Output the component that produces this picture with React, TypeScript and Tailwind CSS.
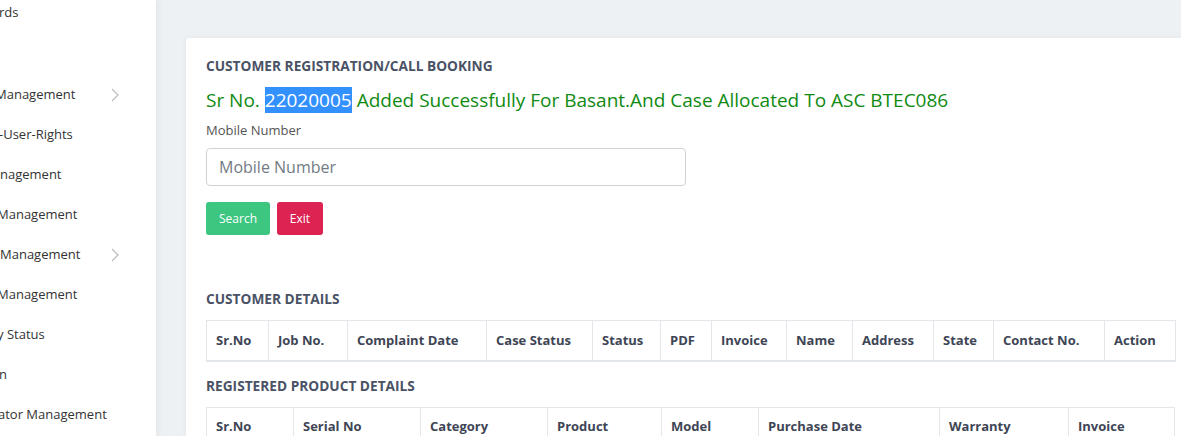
const sideItems: { label: string; chevron?: boolean; shift: number; h?: number }[] = [
  { label: "rds", shift: -1, h: 42 },
  { label: "", shift: 0 },
  { label: "Management", chevron: true, shift: -5 },
  { label: "-User-Rights", shift: -1 },
  { label: "nagement", shift: 0 },
  { label: "Management", shift: -3 },
  { label: "Management", chevron: true, shift: 0 },
  { label: "Management", shift: -3 },
  { label: "y Status", shift: -3 },
  { label: "n", shift: -1 },
  { label: "ator Management", shift: -2 },
];

const customerCols = [
  { h: "Sr.No", w: 62 },
  { h: "Job No.", w: 79 },
  { h: "Complaint Date", w: 139 },
  { h: "Case Status", w: 106 },
  { h: "Status", w: 68 },
  { h: "PDF", w: 51 },
  { h: "Invoice", w: 75 },
  { h: "Name", w: 66 },
  { h: "Address", w: 81 },
  { h: "State", w: 60 },
  { h: "Contact No.", w: 111 },
  { h: "Action", w: 71 },
];

const productCols = [
  { h: "Sr.No", w: 87 },
  { h: "Serial No", w: 127 },
  { h: "Category", w: 127 },
  { h: "Product", w: 114 },
  { h: "Model", w: 97 },
  { h: "Purchase Date", w: 181 },
  { h: "Warranty", w: 129 },
  { h: "Invoice", w: 106 },
];

function HeaderTable({ cols }: { cols: { h: string; w: number }[] }) {
  return (
    <table className="border-collapse text-[13px] font-bold text-[#3e4555]">
      <thead>
        <tr>
          {cols.map((c) => (
            <th
              key={c.h}
              style={{ width: c.w }}
              className="h-[40px] border border-b-2 border-[#e3e6ea] px-[9px] text-left align-middle font-bold"
            >
              {c.h}
            </th>
          ))}
        </tr>
      </thead>
    </table>
  );
}

export default function App() {
  return (
    <div
      className="flex h-[436px] w-[1181px] overflow-hidden bg-[#eef1f4]"
      style={{ fontFamily: "'Open Sans', 'Noto Sans', sans-serif" }}
    >
      <aside className="relative w-[156px] shrink-0 overflow-hidden bg-white pt-[3px] text-[13px] text-[#333] shadow-[2px_0_8px_rgba(0,0,0,0.05)]">
        {sideItems.map((it, i) => (
          <div key={i} className="relative flex items-start" style={{ height: it.h ?? 40 }}>
            <span className="whitespace-nowrap leading-[18px]" style={{ marginLeft: it.shift }}>
              {it.label}
            </span>
            {it.chevron && (
              <svg
                viewBox="0 0 10 16"
                className="absolute left-[110px] top-[2px] h-[16px] w-[10px]"
                fill="none"
                stroke="#b9bcc0"
                strokeWidth="1.2"
              >
                <path d="M2 2l6 6-6 6" />
              </svg>
            )}
          </div>
        ))}
      </aside>

      <main className="flex-1 pl-[30px] pt-[38px]">
        <section className="h-full rounded-tl-[4px] bg-white pl-[20px] pt-[19px] shadow-[0_0_6px_rgba(0,0,0,0.05)]">
          <h2 className="text-[13.7px] font-bold leading-[18px] text-[#4a5266]">
            CUSTOMER REGISTRATION/CALL BOOKING
          </h2>
          <p className="mt-[12px] text-[19px] leading-[26px] text-[#0f8a12]">
            Sr No. <span className="bg-[#3390ff] text-white">22020005</span> Added Successfully For
            Basant.And Case Allocated To ASC BTEC086
          </p>
          <label className="mt-[8px] block text-[13px] leading-[18px] text-[#555]">Mobile Number</label>
          <input
            placeholder="Mobile Number"
            className="mt-[9px] block h-[38px] w-[480px] rounded-[4px] border border-[#cfd3d8] px-[12px] text-[16px] text-[#495057] placeholder:text-[#727b84] outline-none"
          />
          <div className="mt-[16px] flex gap-[7px]">
            <button className="h-[33px] w-[64px] rounded-[3px] bg-[#3cc67f] text-[12px] text-white">
              Search
            </button>
            <button className="h-[33px] w-[46px] rounded-[3px] bg-[#dc2352] text-[12px] text-white">
              Exit
            </button>
          </div>

          <h3 className="mt-[55px] text-[13.7px] font-bold leading-[18px] text-[#4a5266]">CUSTOMER DETAILS</h3>
          <div className="mt-[12px]">
            <HeaderTable cols={customerCols} />
          </div>
          <h3 className="mt-[15px] text-[13.7px] font-bold leading-[18px] text-[#4a5266]">
            REGISTERED PRODUCT DETAILS
          </h3>
          <div className="mt-[12px]">
            <HeaderTable cols={productCols} />
          </div>
        </section>
      </main>
    </div>
  );
}
